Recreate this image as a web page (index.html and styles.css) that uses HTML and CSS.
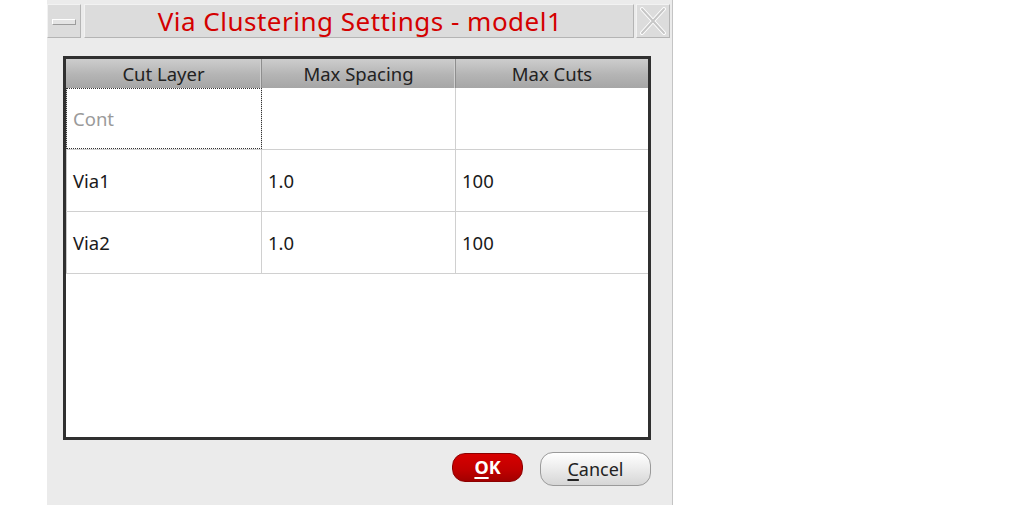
FILE: index.html
```html
<!DOCTYPE html>
<html>
<head>
<meta charset="utf-8">
<link rel="stylesheet" href="styles.css">
</head>
<body>
<div class="page">
  <div class="dialog">
    <div class="titlebar">
      <div class="tb-btn"><span class="min-glyph"></span></div>
      <div class="tb-title">Via Clustering Settings - model1</div>
      <div class="tb-btn close">
        <svg width="30" height="30" viewBox="0 0 30 30">
          <path d="M4 3 L26 27 M26 3 L4 27" stroke="#ffffff" stroke-width="4" stroke-linecap="round"/>
          <path d="M4 3 L26 27 M26 3 L4 27" stroke="#c6c6c6" stroke-width="2" stroke-linecap="round"/>
        </svg>
      </div>
    </div>
    <div class="content">
      <div class="table-frame">
        <div class="grid thead">
          <div class="hcell">Cut Layer</div>
          <div class="hcell">Max Spacing</div>
          <div class="hcell">Max Cuts</div>
        </div>
        <div class="grid trow">
          <div class="cell muted focus">Cont</div>
          <div class="cell"></div>
          <div class="cell"></div>
        </div>
        <div class="grid trow">
          <div class="cell">Via1</div>
          <div class="cell">1.0</div>
          <div class="cell">100</div>
        </div>
        <div class="grid trow">
          <div class="cell">Via2</div>
          <div class="cell">1.0</div>
          <div class="cell">100</div>
        </div>
      </div>
      <div class="actions">
        <button class="btn ok"><u>O</u>K</button>
        <button class="btn cancel"><u>C</u>ancel</button>
      </div>
    </div>
  </div>
</div>
</body>
</html>
```
FILE: styles.css
```css
html, body {
  margin: 0;
  padding: 0;
  background: #ffffff;
}
body {
  font-family: "Noto Sans", "Open Sans", sans-serif;
}
.page {
  width: 1013px;
  height: 505px;
  padding-left: 47px;
  box-sizing: border-box;
}
.dialog {
  width: 626px;
  height: 505px;
  box-sizing: border-box;
  background: #ebebeb;
  border-right: 1px solid #c4c4c4;
  display: flex;
  flex-direction: column;
}
.titlebar {
  display: flex;
  padding-top: 4px;
  padding-right: 2px;
  height: 38px;
  box-sizing: border-box;
}
.tb-btn, .tb-title {
  background: #dcdcdc;
  border: 1px solid;
  border-color: #f2f2f2 #b4b4b4 #b4b4b4 #f2f2f2;
  box-sizing: border-box;
  height: 34px;
}
.tb-btn {
  width: 34px;
  display: flex;
  align-items: center;
  justify-content: center;
}
.tb-title {
  flex: 1;
  margin: 0 2px 0 3px;
  color: #d40000;
  font-size: 26px;
  letter-spacing: 0.5px;
  line-height: 32px;
  text-align: center;
  padding-left: 2px;
}
.min-glyph {
  width: 24px;
  height: 6px;
  box-sizing: border-box;
  background: #e4e4e4;
  border: 1px solid;
  border-color: #ffffff #9c9c9c #9c9c9c #ffffff;
  margin-top: 1px;
}
.content {
  padding: 18px 21px 0 16px;
  flex: 1;
}
.table-frame {
  width: 588px;
  height: 384px;
  box-sizing: border-box;
  border: 3px solid #303030;
  background: #ffffff;
}
.grid {
  display: grid;
  grid-template-columns: 196px 194px 1fr;
}
.thead {
  height: 29px;
  background: linear-gradient(#cdcdcd, #b4b4b4 55%, #a6a6a6);
}
.hcell {
  font-size: 18.5px;
  color: #222222;
  text-align: center;
  line-height: 29px;
  border-right: 1px solid #8e8e8e;
  box-shadow: inset -1px 0 0 #d0d0d0;
}
.hcell:last-child {
  border-right: none;
  box-shadow: none;
}
.trow {
  height: 62px;
  border-bottom: 1px solid #d0d0d0;
  box-sizing: border-box;
}
.cell {
  font-size: 18.5px;
  color: #1a1a1a;
  display: flex;
  align-items: center;
  padding-left: 6px;
  border-right: 1px solid #d0d0d0;
}
.cell:first-child {
  border-left: 1px solid #c8c8c8;
}
.cell:last-child {
  border-right: none;
}
.cell.muted {
  color: #9a9a9a;
}
.cell.focus {
  outline: 1px dotted #333333;
  outline-offset: -1px;
}
.actions {
  display: flex;
  justify-content: flex-end;
  align-items: center;
  gap: 17px;
  margin-top: 12px;
  height: 34px;
}
.btn {
  font-family: "Noto Sans", "Open Sans", sans-serif;
  font-size: 18px;
  border-radius: 13px;
  padding: 0;
  box-sizing: border-box;
}
.btn u {
  text-decoration-thickness: 2px;
  text-underline-offset: 3px;
}
.ok {
  width: 71px;
  height: 29px;
  background: linear-gradient(#d70000, #c00000 60%, #a20000);
  border: 1px solid #8c0000;
  color: #ffffff;
  font-weight: bold;
  margin-top: -4px;
}
.cancel {
  width: 111px;
  height: 34px;
  background: linear-gradient(#ffffff, #ebebeb 50%, #d6d6d6);
  border: 1px solid #9a9a9a;
  color: #222222;
}
```
